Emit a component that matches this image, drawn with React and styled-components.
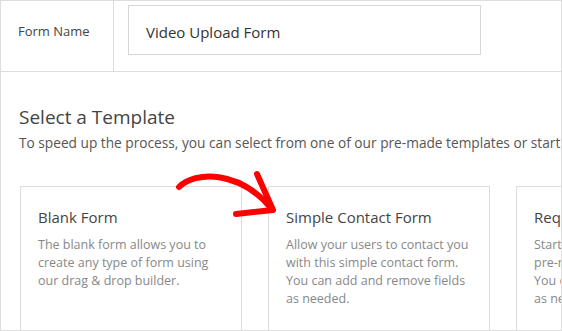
import styled, { createGlobalStyle } from 'styled-components'

const GlobalStyle = createGlobalStyle`
    html, body {
        margin     : 0;
        padding    : 0;
        background : #fff;
    }
    body {
        font-family : "Open Sans", "Noto Sans", sans-serif;
        color       : #444;
    }
`

// descriptions keep the line breaks of the narrow cards
const templates = [
    {
        title: 'Blank Form',
        text: 'The blank form allows you to\ncreate any type of form using\nour drag & drop builder.',
    },
    {
        title: 'Simple Contact Form',
        text: 'Allow your users to contact you\nwith this simple contact form.\nYou can add and remove fields\nas needed.',
    },
    {
        title: 'Request a Quote Form',
        text: 'Start collecting leads with this\npre-made Request a quote form.\nYou can add and remove fields\nas needed.',
    },
]

// hand-drawn red arrow pointing at the second template
const Arrow = () => (
    <ArrowSvg width="130" height="70" viewBox="0 0 130 70">
        <path
            d="M18 27 C 34 11, 78 10, 110 48"
            fill="none"
            stroke="#f00"
            strokeWidth="6"
            strokeLinecap="round"
        />
        <path
            d="M96 14 L 112 50 L 75 54"
            fill="none"
            stroke="#f00"
            strokeWidth="6"
            strokeLinecap="round"
            strokeLinejoin="round"
        />
    </ArrowSvg>
)

export default function App() {
    return (
        <>
            <GlobalStyle />
            <Frame>
                <NameRow>
                    <NameLabel>Form Name</NameLabel>
                    <NameField>
                        <NameInput defaultValue="Video Upload Form" />
                    </NameField>
                </NameRow>
                <Section>
                    <Heading>Select a Template</Heading>
                    <Intro>
                        To speed up the process, you can select from one of our pre-made templates or start with a blank form.
                    </Intro>
                    <Cards>
                        {templates.map((t) => (
                            <Card key={t.title}>
                                <CardTitle>{t.title}</CardTitle>
                                <CardText>{t.text}</CardText>
                            </Card>
                        ))}
                    </Cards>
                    <Arrow />
                </Section>
            </Frame>
        </>
    )
}

const Frame = styled.div`
    box-sizing : border-box;
    width      : 562px;
    height     : 331px;
    border     : 1px solid #ddd;
    overflow   : hidden;
    background : #fff;
`

const NameRow = styled.div`
    display       : flex;
    height        : 70px;
    border-bottom : 1px solid #ddd;
`

const NameLabel = styled.div`
    box-sizing   : border-box;
    width        : 113px;
    flex-shrink  : 0;
    padding      : 21px 0 0 17px;
    border-right : 1px solid #ddd;
    font-size    : 13px;
    color        : #444;
`

const NameField = styled.div`
    flex    : 1;
    padding : 4px 0 0 14px;
`

const NameInput = styled.input`
    box-sizing  : border-box;
    width       : 353px;
    height      : 50px;
    padding     : 4px 0 0 17px;
    border      : 1px solid #d6d6d6;
    outline     : none;
    font-family : inherit;
    font-size   : 15px;
    color       : #333;
`

const Section = styled.div`
    position : relative;
    padding  : 30px 0 0 18px;
`

const Heading = styled.h2`
    margin      : 0;
    font-size   : 19px;
    font-weight : 400;
    line-height : 30px;
    color       : #444;
`

const Intro = styled.p`
    margin      : 1px 0 0;
    font-size   : 13.7px;
    line-height : 20px;
    color       : #555;
    white-space : nowrap;
`

const Cards = styled.div`
    display : flex;
    gap     : 26px;
    margin  : 33px 0 0 1px;
`

const Card = styled.div`
    box-sizing : border-box;
    flex       : 0 0 222px;
    height     : 160px;
    padding    : 19px 8px 0 17px;
    border     : 1px solid #ddd;
    overflow   : hidden;
`

const CardTitle = styled.div`
    font-size   : 15px;
    line-height : 22px;
    color       : #444;
    white-space : nowrap;
`

const CardText = styled.div`
    margin-top  : 8px;
    font-size   : 12.5px;
    line-height : 18px;
    color       : #888;
    white-space : pre-line;
`

const ArrowSvg = styled.svg`
    position : absolute;
    left     : 160px;
    top      : 88px;
`
